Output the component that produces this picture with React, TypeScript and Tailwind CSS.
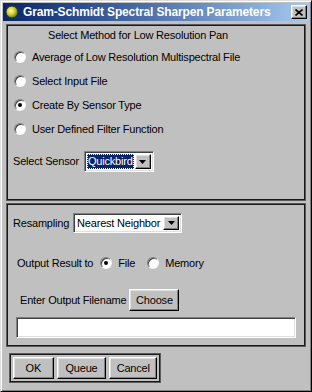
import React from "react";

const raised =
  "border border-t-white border-l-white border-r-black border-b-black shadow-[inset_-1px_-1px_0_#808080,inset_1px_1px_0_#dfdfdf]";
const sunken =
  "border border-t-[#808080] border-l-[#808080] border-r-white border-b-white shadow-[inset_1px_1px_0_#404040,inset_-1px_-1px_0_#dfdfdf]";
const group =
  "border border-[#5a5a5a] shadow-[inset_1px_1px_0_#1a1a1a,inset_-1px_-1px_0_#1a1a1a]";

function Radio({ checked }: { checked?: boolean }) {
  return (
    <span className="relative w-[12px] h-[12px] shrink-0 rounded-full bg-white border border-t-[#808080] border-l-[#808080] border-r-[#f4f4f4] border-b-[#f4f4f4] shadow-[inset_1px_1px_0_#404040] flex items-center justify-center">
      {checked && <span className="w-[4px] h-[4px] rounded-full bg-black" />}
    </span>
  );
}

function Arrow() {
  return (
    <span className={`w-[16px] h-full bg-[#c0c0c0] flex items-center justify-center ${raised}`}>
      <svg width="7" height="4" viewBox="0 0 7 4">
        <path d="M0 0h7L3.5 4z" fill="#000" />
      </svg>
    </span>
  );
}

function Button({ label, w }: { label: string; w: string }) {
  return (
    <button className={`h-[22px] ${w} bg-[#c0c0c0] text-black flex items-center justify-center ${raised}`}>
      {label}
    </button>
  );
}

export default function App() {
  const methods = [
    "Average of Low Resolution Multispectral File",
    "Select Input File",
    "Create By Sensor Type",
    "User Defined Filter Function",
  ];

  return (
    <div className="w-[312px] h-[392px] bg-[#c0c0c0] text-[11px] tracking-[-0.2px] text-black font-['Liberation_Sans',Arial,sans-serif] border border-t-[#dfdfdf] border-l-[#dfdfdf] border-r-black border-b-black shadow-[inset_1px_1px_0_#fff,inset_-1px_-1px_0_#808080] p-[2px] flex flex-col overflow-hidden">
      {/* title bar */}
      <div className="h-[18px] flex items-center bg-gradient-to-r from-[#0a246a] to-[#a6caf0] pl-[2px] pr-[2px]">
        <svg width="14" height="14" viewBox="0 0 14 14" className="shrink-0">
          <defs>
            <radialGradient id="orb" cx="0.4" cy="0.4" r="0.6">
              <stop offset="0" stopColor="#fbf7a0" />
              <stop offset="0.5" stopColor="#d6d23a" />
              <stop offset="1" stopColor="#5f7a1c" />
            </radialGradient>
          </defs>
          <circle cx="7" cy="7" r="6" fill="url(#orb)" stroke="#2f3a10" strokeWidth="1" />
        </svg>
        <span className="ml-[4px] text-white font-bold text-[12px] tracking-[-0.15px] leading-none whitespace-nowrap">
          Gram-Schmidt Spectral Sharpen Parameters
        </span>
        <span className={`ml-auto w-[16px] h-[14px] bg-[#c0c0c0] flex items-center justify-center ${raised}`}>
          <svg width="8" height="7" viewBox="0 0 8 7">
            <path d="M0.5 0.5L7.5 6.5M7.5 0.5L0.5 6.5" stroke="#000" strokeWidth="1.6" />
          </svg>
        </span>
      </div>

      {/* panel 1 */}
      <div className={`mt-[3px] ml-[3px] w-[300px] h-[177px] flex flex-col ${group}`}>
        <div className="h-[20px] pt-[3px] pl-[41px] whitespace-nowrap leading-[14px]">
          Select Method for Low Resolution Pan
        </div>
        {methods.map((m, i) => (
          <div key={m} className="h-[24px] flex items-center pl-[7px] gap-[6px] whitespace-nowrap">
            <Radio checked={i === 2} />
            <span>{m}</span>
          </div>
        ))}
        <div className="mt-[10px] flex items-center pl-[6px] gap-[5px]">
          <span>Select Sensor</span>
          <span className={`w-[70px] h-[21px] bg-white flex items-stretch p-[2px] ${sunken}`}>
            <span className="flex-1 bg-[#0a246a] text-white outline-1 outline-dotted outline-white -outline-offset-1 flex items-center pl-[1px] mr-[1px]">
              Quickbird
            </span>
            <Arrow />
          </span>
        </div>
      </div>

      {/* panel 2 */}
      <div className={`mt-[2px] ml-[3px] w-[300px] h-[144px] flex flex-col ${group}`}>
        <div className="mt-[9px] flex items-center pl-[6px] gap-[4px]">
          <span>Resampling</span>
          <span className={`w-[109px] h-[20px] bg-white flex items-stretch p-[2px] ${sunken}`}>
            <span className="flex-1 flex items-center pl-[1px] whitespace-nowrap">Nearest Neighbor</span>
            <Arrow />
          </span>
        </div>
        <div className="mt-[20px] h-[20px] flex items-center pl-[10px] whitespace-nowrap">
          <span>Output Result to</span>
          <span className="ml-[7px]">
            <Radio checked />
          </span>
          <span className="ml-[6px]">File</span>
          <span className="ml-[12px]">
            <Radio />
          </span>
          <span className="ml-[6px]">Memory</span>
        </div>
        <div className="mt-[16px] flex items-center pl-[13px] whitespace-nowrap">
          <span>Enter Output Filename</span>
          <span className="ml-[3px]">
            <Button label="Choose" w="w-[50px]" />
          </span>
        </div>
        <div className={`mt-[6px] ml-[9px] w-[280px] h-[21px] bg-white ${sunken}`} />
      </div>

      {/* buttons */}
      <div className={`mt-[6px] ml-[6px] w-[152px] h-[30px] flex items-center gap-[3px] px-[3px] ${group}`}>
        <Button label="OK" w="w-[41px]" />
        <Button label="Queue" w="w-[50px]" />
        <Button label="Cancel" w="w-[48px]" />
      </div>
    </div>
  );
}
